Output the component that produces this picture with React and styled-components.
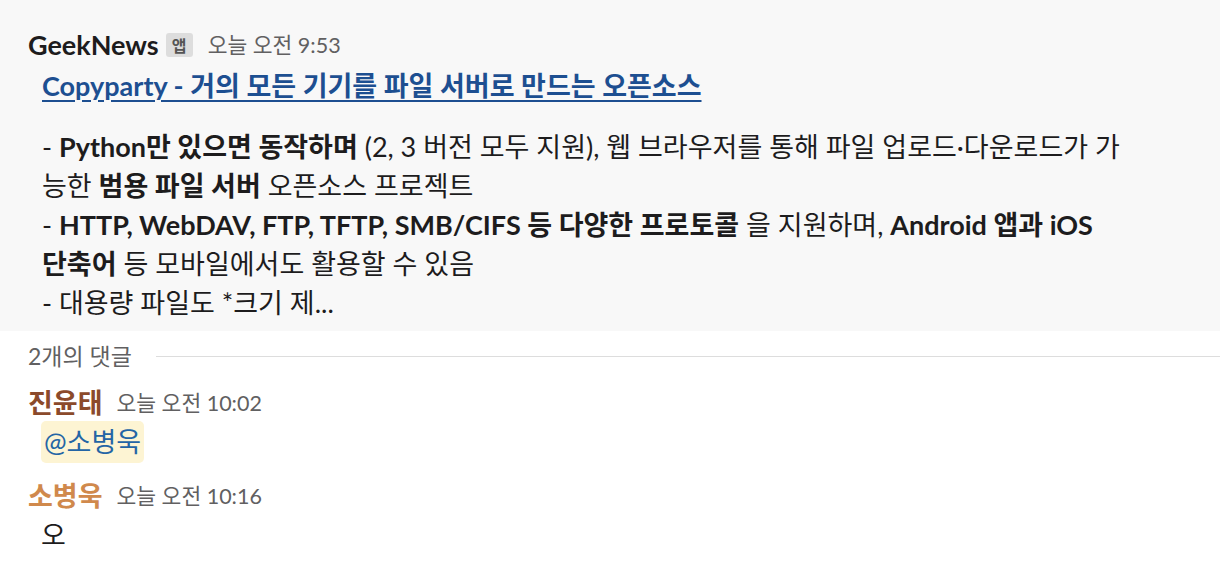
import React from "react";
import styled, { createGlobalStyle } from "styled-components";

const Global = createGlobalStyle`
  html, body { margin: 0; padding: 0; background: #ffffff; }
  body { font-family: Lato, "Noto Sans CJK KR", sans-serif; color: #1d1c1d; }
`;

const Page = styled.div`
  width: 1220px;
  height: 576px;
  overflow: hidden;
  display: flex;
  flex-direction: column;
`;

const Post = styled.section`
  background: #f8f8f8;
  padding: 28px 0 9px 28px;
`;

const Header = styled.div`
  display: flex;
  align-items: center;
  height: 34px;
`;

const Name = styled.span`
  font-size: 27px;
  font-weight: 700;
  color: ${(p) => p.$color || "#1d1c1d"};
  line-height: 34px;
`;

const Badge = styled.span`
  margin-left: 7px;
  background: #dddddd;
  color: #555555;
  border-radius: 3px;
  font-size: 16px;
  font-weight: 700;
  width: 27px;
  height: 24px;
  display: flex;
  align-items: center;
  justify-content: center;
`;

const Time = styled.span`
  margin-left: ${(p) => p.$gap || 14}px;
  font-size: 21.5px;
  color: #616061;
  line-height: 34px;
`;

const Body = styled.div`
  padding-left: 14px;
  width: 1079px;
  font-size: 27px;
`;

const Link = styled.a`
  display: inline-block;
  margin-top: 6px;
  color: #1d4f91;
  text-decoration: underline;
  text-underline-offset: 4px;
  text-decoration-thickness: 2px;
  font-weight: 700;
  font-size: 27px;
  line-height: 36px;
`;

const Para = styled.p`
  margin: 23px 0 0;
  line-height: 39px;
  color: #1d1c1d;
`;

const Divider = styled.div`
  display: flex;
  align-items: center;
  gap: 24px;
  padding-left: 28px;
  margin-top: 12px;
  height: 26px;
  font-size: 23px;
  line-height: 26px;
  color: #616061;
  &::after {
    content: "";
    flex: 1;
    height: 1px;
    background: #dddddd;
  }
`;

const Comment = styled.div`
  padding-left: 28px;
  margin-top: ${(p) => p.$top || 0}px;
`;

const Text = styled.div`
  padding-left: 13px;
  margin-top: 1px;
  font-size: 27px;
  line-height: 42px;
`;

const Mention = styled.span`
  display: inline-block;
  background: #fdf4d3;
  color: #2465a5;
  border-radius: 5px;
  padding: 0 3px;
`;

export default function App() {
  return (
    <Page>
      <Global />
      <Post>
        <Header>
          <Name>GeekNews</Name>
          <Badge>앱</Badge>
          <Time $gap={15}>오늘 오전 9:53</Time>
        </Header>
        <Body>
          <Link href="#">Copyparty - 거의 모든 기기를 파일 서버로 만드는 오픈소스</Link>
          <Para>
            - <b>Python만 있으면 동작하며</b> (2, 3 버전 모두 지원), 웹 브라우저를 통해 파일 업로드·다운로드가 가능한{" "}
            <b>범용 파일 서버</b> 오픈소스 프로젝트
            <br />- <b>HTTP, WebDAV, FTP, TFTP, SMB/CIFS 등 다양한 프로토콜</b> 을 지원하며,{" "}
            <b>Android 앱과 iOS 단축어</b> 등 모바일에서도 활용할 수 있음
            <br />- 대용량 파일도 *크기 제...
          </Para>
        </Body>
      </Post>
      <Divider>2개의 댓글</Divider>
      <Comment $top={17}>
        <Header>
          <Name $color="#8b4a2b">진윤태</Name>
          <Time>오늘 오전 10:02</Time>
        </Header>
        <Text>
          <Mention>@소병욱</Mention>
        </Text>
      </Comment>
      <Comment $top={16}>
        <Header>
          <Name $color="#d0894c">소병욱</Name>
          <Time>오늘 오전 10:16</Time>
        </Header>
        <Text>오</Text>
      </Comment>
    </Page>
  );
}
